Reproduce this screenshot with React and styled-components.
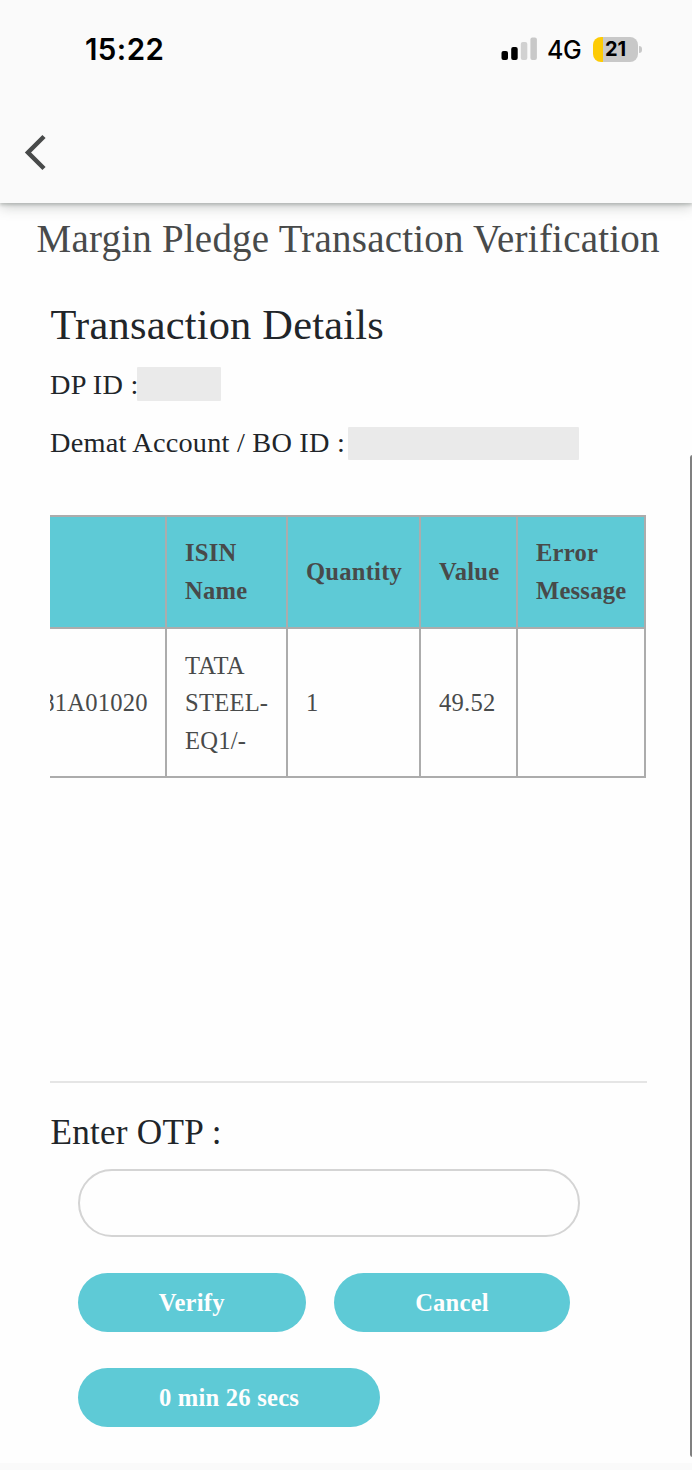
import React from "react";
import styled, { createGlobalStyle } from "styled-components";

const GlobalStyle = createGlobalStyle`
  * { box-sizing: border-box; }
  body { margin: 0; background: #fefefe; }
`;

const Screen = styled.div`
  position: relative;
  display: flex;
  flex-direction: column;
  width: 692px;
  height: 1470px;
  overflow: hidden;
  background: #fefefe;
  font-family: "Liberation Serif", "Times New Roman", serif;
  letter-spacing: 0.22px;
  color: #212529;
`;

const Header = styled.header`
  flex: none;
  height: 203px;
  background: #fafafa;
  box-shadow: 0 2px 3px rgba(60, 68, 64, 0.24), 0 4px 12px rgba(60, 68, 64, 0.26);
`;

const StatusBar = styled.div`
  display: flex;
  align-items: center;
  height: 98px;
  padding: 0 50px 0 85px;
  font-family: Inter, sans-serif;
  letter-spacing: 0;
  color: #000;
`;

const Clock = styled.span`
  flex: 1;
  font-size: 29.5px;
  font-weight: 600;
  letter-spacing: 0.4px;
`;

const Network = styled.span`
  width: 35px;
  margin: 1px 11px 0 10px;
  font-size: 25px;
  font-weight: 500;
  letter-spacing: -0.3px;
`;

const Battery = styled.div`
  display: flex;
  align-items: center;
  justify-content: center;
  width: 45px;
  height: 25px;
  border-radius: 8px;
  background: linear-gradient(to right, #fdcb05 10px, #c8c8c8 10px);
  font-size: 20px;
  font-weight: 700;
  line-height: 25px;
`;

const BatteryCap = styled.div`
  width: 3px;
  height: 7px;
  margin-left: 1px;
  border-radius: 0 3px 3px 0;
  background: #c8c8c8;
`;

const BackButton = styled.button`
  display: block;
  width: 50px;
  height: 50px;
  margin: 29px 0 0 10px;
  padding: 0;
  border: 0;
  background: none;
`;

const Title = styled.h1`
  margin: 14px 0 0;
  padding-left: 36.5px;
  font-size: 39px;
  font-weight: 400;
  line-height: 44px;
  white-space: nowrap;
  color: #484a4a;
`;

const Content = styled.main`
  display: flex;
  flex-direction: column;
  width: 597px;
  margin-left: 50px;
`;

const SectionTitle = styled.h2`
  margin: 39px 0 0;
  padding-left: 0.5px;
  font-size: 42.4px;
  font-weight: 400;
  line-height: 50px;
`;

const Detail = styled.div`
  display: flex;
  height: ${(p) => p.$height}px;
  margin-top: ${(p) => p.$top}px;
  font-size: 28.3px;
  white-space: nowrap;
`;

const DetailLabel = styled.span`
  width: ${(p) => p.$width}px;
  line-height: ${(p) => p.$line}px;
`;

const Redacted = styled.span`
  width: ${(p) => p.$width}px;
  height: 100%;
  border-radius: 1px;
  background: #eaeaea;
`;

const TableScroll = styled.div`
  display: flex;
  justify-content: flex-end;
  height: 568px;
  margin-top: 55px;
  padding-right: 1px;
  overflow: hidden;
  border-bottom: 2px solid #e5e5e5;
`;

const Table = styled.table`
  flex: none;
  align-self: flex-start;
  width: 677px;
  table-layout: fixed;
  border-collapse: collapse;
  font-size: 24.6px;
  line-height: 37.6px;
  color: #484a4a;
`;

const Cell = styled.td`
  height: ${(p) => p.$height}px;
  padding: 1px 17px 0 18px;
  border: 2px solid #acacac;
  text-align: left;
  vertical-align: middle;
`;

const HeadCell = styled(Cell)`
  padding-top: 0;
  background: #5ecad6;
  font-weight: 700;
`;

const OtpLabel = styled.label`
  margin-top: 29px;
  padding-left: 0.5px;
  font-size: 35.2px;
  line-height: 42px;
`;

const OtpInput = styled.input`
  width: 502px;
  height: 68px;
  margin: 15px 0 0 28px;
  padding: 0 30px;
  border: 2px solid #d4d4d4;
  border-radius: 34px;
  background: #fefefe;
  font: inherit;
`;

const Actions = styled.div`
  display: flex;
  flex-wrap: wrap;
  gap: 36px 28.5px;
  margin: 36px 0 0 28px;
`;

const PillButton = styled.button`
  width: ${(p) => p.$width}px;
  height: 59px;
  padding: 1px 0 0;
  border: 0;
  border-radius: 30px;
  background: #5ecad6;
  color: #fefefe;
  font-family: inherit;
  font-size: 24.6px;
  font-weight: 700;
  letter-spacing: inherit;
`;

const Footer = styled.div`
  height: 7px;
  margin-top: auto;
  background: #fafafa;
`;

const ScrollThumb = styled.div`
  position: absolute;
  top: 455px;
  right: -3px;
  width: 5px;
  height: 1002px;
  border-radius: 3px;
  background: #808080;
`;

const columns = [
  { width: 197, title: "", value: "INE081A01020" },
  { width: 121, title: "ISIN Name", value: "TATA STEEL-EQ1/-" },
  { width: 133, title: "Quantity", value: "1" },
  { width: 97, title: "Value", value: "49.52" },
  { width: 128, title: "Error Message", value: "" },
];

function SignalIcon() {
  return (
    <svg width="36" height="24" viewBox="0 0 36 24">
      <rect x="0.5" y="14" width="6.5" height="9" rx="2" fill="#000" />
      <rect x="10.2" y="10" width="6.5" height="13" rx="2" fill="#000" />
      <rect x="19.8" y="5" width="6.5" height="18" rx="2" fill="#d1d1d1" />
      <rect x="29.4" y="0.5" width="6.5" height="22.5" rx="2" fill="#c8c8c8" />
    </svg>
  );
}

export default function App() {
  return (
    <Screen>
      <GlobalStyle />
      <Header>
        <StatusBar>
          <Clock>15:22</Clock>
          <SignalIcon />
          <Network>4G</Network>
          <Battery>21</Battery>
          <BatteryCap />
        </StatusBar>
        <BackButton aria-label="Back">
          <svg width="50" height="50" viewBox="0 0 50 50">
            <path d="M34 9.5 L18 25.5 L34 41.5" fill="none" stroke="#484a4a" strokeWidth="4.5" />
          </svg>
        </BackButton>
      </Header>
      <Title>Margin Pledge Transaction Verification</Title>
      <Content>
        <SectionTitle>Transaction Details</SectionTitle>
        <Detail $top={17} $height={34}>
          <DetailLabel $width={87} $line={36}>DP ID :</DetailLabel>
          <Redacted $width={84} />
        </Detail>
        <Detail $top={26} $height={33}>
          <DetailLabel $width={298} $line={32}>Demat Account / BO ID :</DetailLabel>
          <Redacted $width={231} />
        </Detail>
        <TableScroll>
          <Table>
            <colgroup>
              {columns.map((c) => (
                <col key={c.width} style={{ width: c.width }} />
              ))}
            </colgroup>
            <thead>
              <tr>
                {columns.map((c) => (
                  <HeadCell as="th" key={c.width} $height={112}>{c.title}</HeadCell>
                ))}
              </tr>
            </thead>
            <tbody>
              <tr>
                {columns.map((c) => (
                  <Cell key={c.width} $height={149}>{c.value}</Cell>
                ))}
              </tr>
            </tbody>
          </Table>
        </TableScroll>
        <OtpLabel htmlFor="otp">Enter OTP :</OtpLabel>
        <OtpInput id="otp" />
        <Actions>
          <PillButton $width={227.5}>Verify</PillButton>
          <PillButton $width={236}>Cancel</PillButton>
          <PillButton $width={302}>0 min 26 secs</PillButton>
        </Actions>
      </Content>
      <Footer />
      <ScrollThumb />
    </Screen>
  );
}
